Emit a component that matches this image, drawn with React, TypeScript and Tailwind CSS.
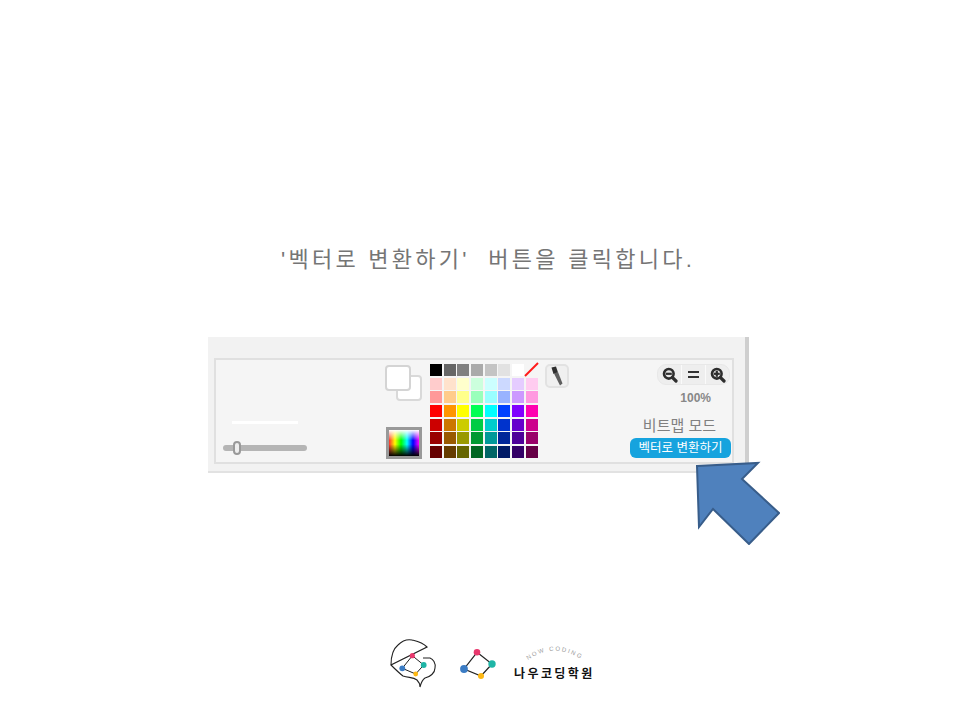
const row0 = ["#000000", "#666666", "#808080", "#aaaaaa", "#c4c4c4", "#e2e2e2", "#ffffff"];
const rows = [
  ["#ffcccc", "#ffe2cc", "#ffffcc", "#ccffdd", "#ccffff", "#ccd9ff", "#e5ccff", "#ffccf0"],
  ["#ff9999", "#ffcc8c", "#ffff8c", "#99ffbb", "#99ffff", "#99b3ff", "#cc99ff", "#ff99e0"],
  ["#ff0000", "#ff9500", "#ffff00", "#00ff55", "#00ffff", "#0040ff", "#8000ff", "#ff00b0"],
  ["#cc0000", "#cc7700", "#cccc00", "#00cc44", "#00cccc", "#0033cc", "#6600cc", "#cc008c"],
  ["#990000", "#995900", "#999900", "#009933", "#009999", "#002699", "#4d0099", "#990069"],
  ["#660000", "#663c00", "#666600", "#006622", "#006666", "#001a66", "#330066", "#660046"],
];

const kr = { fontFamily: '"Liberation Sans", "Noto Sans CJK KR", sans-serif' };

function Palette() {
  return (
    <div className="grid grid-cols-[repeat(8,12px)] grid-rows-[repeat(7,12px)] gap-[1.7px]">
      {row0.map((c) => (
        <div key={c} style={{ backgroundColor: c }} />
      ))}
      <svg viewBox="0 0 12 12" className="size-3 overflow-visible">
        <path d="M-1 12 L12 -1" stroke="#ff1a1a" strokeWidth="2" />
      </svg>
      {rows.flat().map((c, i) => (
        <div key={i} style={{ backgroundColor: c }} />
      ))}
    </div>
  );
}

function Magnifier({ plus, minus }: { plus?: boolean; minus?: boolean }) {
  return (
    <svg viewBox="0 0 16 16" className="size-4">
      <circle cx="6.8" cy="6.8" r="4.8" fill="#e8e8e8" stroke="#2e2e2e" strokeWidth="2.6" />
      <path d="M10.3 10.3 L14 14" stroke="#2e2e2e" strokeWidth="3.2" strokeLinecap="round" />
      {(plus || minus) && <path d="M3.8 6.8 H9.8" stroke="#2e2e2e" strokeWidth="2.2" />}
      {plus && <path d="M6.8 3.8 V9.8" stroke="#2e2e2e" strokeWidth="2.2" />}
    </svg>
  );
}

function ZoomButtons() {
  return (
    <div className="mr-px flex h-[21px] w-[73px] rounded-[9px] border border-[#e8e8e8] bg-[#eeeeee]">
      <div className="flex flex-1 items-center justify-center border-r border-[#fafafa]">
        <Magnifier minus />
      </div>
      <div className="flex flex-1 flex-col items-center justify-center gap-[3px] border-r border-[#fafafa]">
        <div className="h-[2px] w-[11px] bg-[#333333]" />
        <div className="h-[2px] w-[11px] bg-[#333333]" />
      </div>
      <div className="flex flex-1 items-center justify-center">
        <Magnifier plus />
      </div>
    </div>
  );
}

function Arrow() {
  return (
    <svg viewBox="0 0 84 84" className="absolute top-[461px] left-[696px] h-[84px] w-[84px]">
      <path
        d="M1 5 L62 2 L46 18 L83 52 L53 83 L17 48 L3 66 Z"
        fill="#4f81bd"
        stroke="#385d8a"
        strokeWidth="2"
      />
    </svg>
  );
}

function Logos() {
  return (
    <div className="flex h-[55px] items-start">
      <svg viewBox="0 0 55 55" className="h-[55px] w-[55px]">
        <path
          d="M6 30 C6 22 8 14 13 10 C17 6 22 4 27 5 C31 6 37 7 42 12 L6 30 C10 34 14 38 18 41 C24 43 28 42 32 45 C34 47 35 50 35 52 C36 48 37 45 40 43 C45 42 50 38 50 33 C51 28 48 24 45 23 C43 23 40 23 38 23"
          fill="none"
          stroke="#222"
          strokeWidth="1.1"
        />
        <path d="M27.3 20.7 L38.7 30 L30.7 39 L17.3 33.3 Z" fill="none" stroke="#222" strokeWidth="1" />
        <circle cx="27.3" cy="20.7" r="2.6" fill="#e8386d" />
        <circle cx="38.7" cy="30" r="2.9" fill="#1fb5a6" />
        <circle cx="30.7" cy="39" r="2.4" fill="#fdb813" />
        <circle cx="17.3" cy="33.3" r="2.9" fill="#3b7cc4" />
      </svg>
      <svg viewBox="0 0 38 34" className="mt-[13px] ml-[20px] h-[34px] w-[38px]">
        <path d="M17 4.3 L32 16 L21 28 L4 21 Z" fill="none" stroke="#222" strokeWidth="1.2" />
        <circle cx="17" cy="4.3" r="3.3" fill="#e8386d" />
        <circle cx="32" cy="16" r="3.7" fill="#1fb5a6" />
        <circle cx="21" cy="28" r="3" fill="#fdb813" />
        <circle cx="4" cy="21" r="3.9" fill="#3b7cc4" />
      </svg>
      <div className="mt-[11px] ml-[16px] flex w-[82px] flex-col">
        <svg viewBox="0 0 82 18" className="h-[18px] w-[82px]">
          <path id="now-coding-arc" d="M14 14 Q41 -5 70 15" fill="none" />
          <text fontSize="6" letterSpacing="1.7" fill="#999999" style={kr}>
            <textPath href="#now-coding-arc">NOW CODING</textPath>
          </text>
        </svg>
        <span className="mt-[3px] text-[12px] leading-[14px] font-bold tracking-[2.4px] whitespace-nowrap text-[#111111]" style={kr}>
          나우코딩학원
        </span>
      </div>
    </div>
  );
}

export default function App() {
  return (
    <div className="relative flex h-[720px] w-[960px] flex-col items-center bg-white" style={kr}>
      <h1 className="mt-[245px] ml-[16px] h-[30px] text-[22px] leading-[30px] font-normal tracking-[3.25px] whitespace-pre text-[#757575]">
        {"'벡터로 변환하기'  버튼을 클릭합니다."}
      </h1>

      <div className="mt-[62px] ml-[-3px] flex h-[136px] w-[541px] flex-col border-r-4 border-b-2 border-[#cfcfcf] border-b-[#e2e2e2] bg-[#f2f2f2] pt-[21px] pr-[11px] pl-[6px]">
        <div className="flex h-[106px] border-2 border-[#e0e0e0] bg-[#f5f5f5]">
          <div className="flex w-[169px] flex-col pl-[7px]">
            <div className="mt-[61px] ml-[9px] h-[3px] w-[66px] bg-white" />
            <div className="relative mt-[21px] h-[6px] w-[84px] rounded-full bg-[#b5b5b5]">
              <div className="absolute top-[-4px] left-[10px] h-[14px] w-[8px] rounded-[4px] border-2 border-[#999999] bg-[#eeeeee]" />
            </div>
          </div>

          <div className="flex w-[40px] flex-col pt-[5px]">
            <div className="relative h-[38px] w-[38px]">
              <div className="absolute top-[10px] left-[11px] h-[26px] w-[26px] rounded-[4px] border-2 border-[#d9d9d9] bg-white" />
              <div className="absolute top-0 left-0 h-[26px] w-[26px] rounded-[4px] border-2 border-[#d4d4d4] bg-white" />
            </div>
            <div className="mt-[24px] ml-[1px] h-[32px] w-[36px] border-[3px] border-[#999999] bg-[linear-gradient(to_bottom,#ffffff_0%,transparent_40%,transparent_55%,#000000_100%),linear-gradient(to_right,#ff3030,#ffff00,#00ff00,#00ffff,#0000ff,#ff00ff)]" />
          </div>

          <div className="ml-[5px] pt-[4px]">
            <Palette />
          </div>

          <div className="ml-[7px] pt-[4px]">
            <div className="flex h-[24px] w-[24px] items-center justify-center rounded-[5px] border-2 border-[#e2e2e2] bg-[#f0f0f0]">
              <svg viewBox="0 0 16 22" className="h-[22px] w-4">
                <path d="M2.5 2.5 L7 1.5 L9 7.5 L4.5 9 Z" fill="#2e2e2e" />
                <path d="M5 8.5 L9 7 L13.5 18.5 L11 20.5 Z" fill="#5e5e5e" />
              </svg>
            </div>
          </div>

          <div className="ml-auto flex w-[105px] flex-col items-end pt-[4px] pr-[1px]">
            <ZoomButtons />
            <span className="mt-[6px] mr-[20px] text-[12px] leading-[14px] font-bold text-[#888888]">100%</span>
            <span className="mt-[12px] mr-[15px] text-[15px] leading-[17px] text-[#808080]">비트맵 모드</span>
            <div className="mt-[4px] flex h-[20px] w-[101px] shrink-0 items-center justify-center rounded-[6px] bg-[#16a3de] text-[12.5px] leading-none whitespace-nowrap text-white">
              벡터로 변환하기
            </div>
          </div>
        </div>
      </div>

      <Arrow />

      <div className="mt-[162px] ml-[21px]">
        <Logos />
      </div>
    </div>
  );
}
